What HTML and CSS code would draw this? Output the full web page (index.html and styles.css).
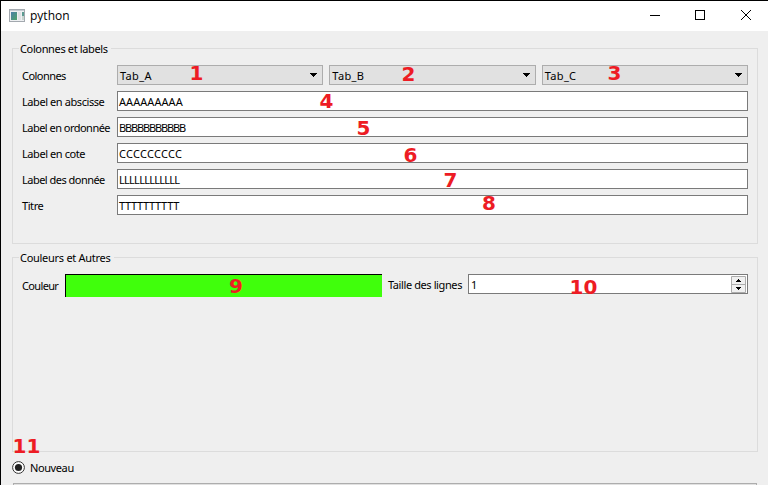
FILE: index.html
```html
<!DOCTYPE html>
<html lang="fr">
<head>
<meta charset="utf-8">
<title>python</title>
<link rel="stylesheet" href="styles.css">
</head>
<body>
<div class="window">
  <header class="titlebar">
    <svg class="app-icon" width="16" height="13" viewBox="0 0 16 13">
      <defs><linearGradient id="pane" x1="0" y1="0" x2="1" y2="1"><stop offset="0" stop-color="#4a7fa8"/><stop offset="1" stop-color="#4ea368"/></linearGradient></defs>
      <rect x=".5" y=".5" width="15" height="12" fill="#eef0f2" stroke="#a3a9af"/>
      <rect x="1" y="1" width="14" height="1" fill="#c5cbd1"/>
      <rect x="2" y="3" width="6" height="8" fill="url(#pane)"/>
      <rect x="9" y="3" width="3" height="8" fill="#dfe2e4"/>
      <rect x="13" y="3" width="2" height="4" fill="#5b9a90"/>
      <rect x="13" y="7" width="2" height="4" fill="#c8d4ce"/>
    </svg>
    <span class="title">python</span>
    <svg class="controls" width="102" height="12" viewBox="0 0 102 12" fill="none" stroke="#000">
      <path d="M0 6.5h10"/><rect x="45.5" y="1.5" width="9" height="9"/><path d="M91 1l10 10M101 1l-10 10"/>
    </svg>
  </header>
  <main class="content">
    <fieldset class="group labels">
      <legend class="t-group1">Colonnes et labels</legend>
      <div class="form">
        <label class="t-col">Colonnes</label>
        <div class="combos">
          <div class="combo"><span>Tab_A</span><svg width="8" height="4" viewBox="0 0 8 4"><path d="M0 0h7v1H6v1H5v1H4v1H3V3H2V2H1V1H0z"/></svg></div>
          <div class="combo"><span>Tab_B</span><svg width="8" height="4" viewBox="0 0 8 4"><path d="M0 0h7v1H6v1H5v1H4v1H3V3H2V2H1V1H0z"/></svg></div>
          <div class="combo"><span>Tab_C</span><svg width="8" height="4" viewBox="0 0 8 4"><path d="M0 0h7v1H6v1H5v1H4v1H3V3H2V2H1V1H0z"/></svg></div>
        </div>
        <label class="t-abs">Label en abscisse</label><div class="field"><span class="v-a">AAAAAAAAA</span></div>
        <label class="t-ord">Label en ordonnée</label><div class="field"><span class="v-b">BBBBBBBBBBB</span></div>
        <label class="t-cote">Label en cote</label><div class="field"><span class="v-c">CCCCCCCCC</span></div>
        <label class="t-don">Label des donnée</label><div class="field"><span class="v-l">LLLLLLLLLLLL</span></div>
        <label class="t-titre">Titre</label><div class="field"><span class="v-t">TTTTTTTTTT</span></div>
      </div>
    </fieldset>
    <fieldset class="group colors">
      <legend class="t-group2">Couleurs et Autres</legend>
      <div class="color-row">
        <label class="color-label">Couleur</label>
        <div class="swatch"></div>
        <label class="size-label">Taille des lignes</label>
        <div class="spin"><span>1</span>
          <svg width="15" height="17" viewBox="0 0 15 17"><path d="M.5.5h14v16H.5zM.5 8.5h14" fill="#f0f0f0" stroke="#acacac"/><path d="M7 3h1v1h1v1h1v1H5V5h1V4h1zM5 11h5v1H9v1H8v1H7v-1H6v-1H5z"/></svg>
        </div>
      </div>
    </fieldset>
    <div class="radio">
      <svg width="13" height="13" viewBox="0 0 13 13"><circle cx="6.5" cy="6.5" r="5.9" fill="#fff" stroke="#333"/><circle cx="6.5" cy="6.5" r="3.6" fill="#222"/></svg>
      <span>Nouveau</span>
    </div>
    <div class="next-button"></div>
  </main>
  <b class="mark m1">1</b><b class="mark m2">2</b><b class="mark m3">3</b><b class="mark m4">4</b>
  <b class="mark m5">5</b><b class="mark m6">6</b><b class="mark m7">7</b><b class="mark m8">8</b>
  <b class="mark m9">9</b><b class="mark m10">10</b><b class="mark m11">11</b>
</div>
</body>
</html>
```
FILE: styles.css
```css
* { box-sizing: border-box; }
body { margin: 0; }
.window {
  position: relative;
  width: 768px;
  height: 485px;
  overflow: hidden;
  border: solid #000;
  border-width: 1px 0 0 1px;
  background: #efefef;
  color: #000;
  font: 11px/14px "Noto Sans", sans-serif;
  white-space: nowrap;
}
svg { display: block; flex: none; }
.titlebar {
  display: flex;
  align-items: center;
  height: 30px;
  padding: 0 16px 0 8px;
  background: #fff;
}
.app-icon { margin-top: -2px; }
.title { margin-left: 5px; font: 12px/16px "Open Sans", sans-serif; }
.controls { margin: -2px 0 0 auto; }
.content { padding: 10px 10px 0 11px; }
.group {
  position: relative;
  min-width: 0;
  margin: 0;
  padding: 0 9px;
  border: 1px solid #dcdcdc;
}
.group legend { height: 14px; margin-left: -3px; padding: 0 3px 0 1px; line-height: 16px; }
.labels { height: 203px; }
.colors { height: 202px; margin-top: 6px; }
.form {
  display: grid;
  grid-template-columns: 95px 1fr;
  grid-auto-rows: 20px;
  row-gap: 6px;
  padding-top: 10px;
}
.form label { line-height: 22px; }
.combos { display: grid; grid-template-columns: repeat(3, 1fr); grid-template-rows: 20px; gap: 6px; }
.combo {
  display: flex;
  justify-content: space-between;
  padding: 0 4px 0 2px;
  border: 1px solid #adadad;
  background: #e1e1e1;
  line-height: 20px;
  letter-spacing: 0.35px;
}
.combo svg { margin-top: 7px; }
.field { padding-left: 1px; border: 1px solid #7a7a7a; background: #fff; line-height: 20px; }

.t-group1 { letter-spacing: -0.36px; }
.t-group2 { letter-spacing: -0.28px; }
.t-col { letter-spacing: -0.55px; }
.t-abs, .t-cote, .t-titre { letter-spacing: -0.42px; }
.t-ord, .t-don { letter-spacing: -0.52px; }
.v-c { letter-spacing: 0.28px; }
.v-a { letter-spacing: 0.05px; }
.v-b { letter-spacing: -1.15px; }
.v-l { letter-spacing: -0.73px; }
.v-t { letter-spacing: -0.32px; }

.color-row { display: flex; padding-top: 10px; }
.color-label { width: 43px; line-height: 24px; letter-spacing: -0.65px; }
.swatch {
  width: 317px;
  height: 23px;
  border: solid #000;
  border-width: 1px 0 0 1px;
  background: #40ff0c;
}
.size-label { width: 80px; margin-left: 6px; line-height: 22px; letter-spacing: -0.4px; }
.spin {
  display: flex;
  justify-content: space-between;
  flex: 1;
  height: 20px;
  padding: 1px 1px 0 2px;
  border: 1px solid #7a7a7a;
  background: #fff;
  line-height: 18px;
}
.radio { display: flex; align-items: center; gap: 5px; height: 14px; margin-top: 8px; letter-spacing: -0.4px; }
.radio span { padding-top: 2px; }
.next-button { height: 20px; margin: 9px 1px 0; border: 1px solid #adadad; background: #e1e1e1; }
.mark {
  position: absolute;
  color: #ed1c24;
  font: bold 20px/20px "DejaVu Sans", sans-serif;
}
.m1 { left: 188.5px; top: 62px; }
.m2 { left: 400.5px; top: 63px; }
.m3 { left: 606.5px; top: 62px; }
.m4 { left: 318.5px; top: 90px; }
.m5 { left: 355.5px; top: 117px; }
.m6 { left: 402.5px; top: 144px; }
.m7 { left: 442.5px; top: 169px; }
.m8 { left: 481px; top: 192px; }
.m9 { left: 228px; top: 275px; }
.m10 { left: 568.5px; top: 276px; }
.m11 { left: 11.5px; top: 435px; }
```
